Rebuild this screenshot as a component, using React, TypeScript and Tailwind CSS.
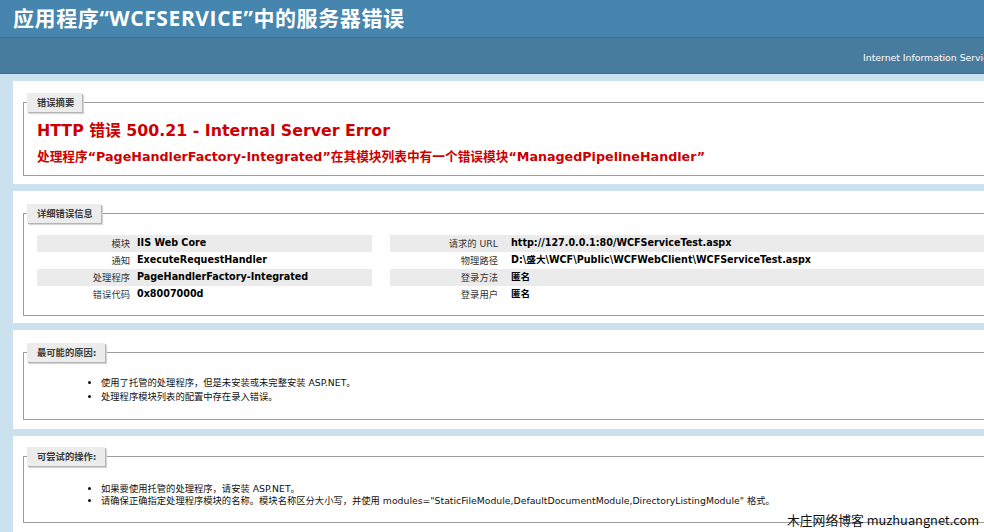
import React from 'react';

const detailsLeft: [string, string][] = [
  ['模块', 'IIS Web Core'],
  ['通知', 'ExecuteRequestHandler'],
  ['处理程序', 'PageHandlerFactory-Integrated'],
  ['错误代码', '0x8007000d'],
];

const detailsRight: [string, string][] = [
  ['请求的 URL', 'http://127.0.0.1:80/WCFServiceTest.aspx'],
  ['物理路径', 'D:\\盛大\\WCF\\Public\\WCFWebClient\\WCFServiceTest.aspx'],
  ['登录方法', '匿名'],
  ['登录用户', '匿名'],
];

// grey legend tab sitting on the fieldset line
const Legend = ({ children }: { children: React.ReactNode }) => (
  <legend className="-ml-[10px] h-[19px] bg-[#ececec] pr-[8px] pl-[10px] leading-[19px] font-bold text-[#3a3a3a] shadow-[1px_1px_0_#b4b4b4,2px_2px_1px_#d6d6d6]">
    {children}
  </legend>
);

const DetailRow = ({
  label,
  value,
  alt,
  labelWidth,
  gap,
}: {
  label: string;
  value: string;
  alt: boolean;
  labelWidth: string;
  gap: string;
}) => (
  <div className={`flex h-[17px] items-center whitespace-nowrap ${alt ? 'bg-[#ebebeb]' : ''}`}>
    <span className={`${labelWidth} shrink-0 text-right text-[#333]`}>{label}</span>
    <span className={`${gap} text-[9.6px] font-bold text-black`}>{value}</span>
  </div>
);

export default function App() {
  return (
    <div className="relative h-[532px] w-[984px] overflow-hidden bg-[#cbe2ee] font-['DejaVu_Sans','Noto_Sans_CJK_SC',sans-serif] text-[9.3px] text-black">
      {/* header */}
      <div className="flex h-[38px] items-center border-b border-[#3e6f93] bg-[#4686ae] pl-[13px]">
        <h1 className="font-['Open_Sans','Noto_Sans_CJK_SC',sans-serif] text-[21px] leading-none font-bold tracking-[0.6px] whitespace-nowrap text-white">
          应用程序“WCFSERVICE”中的服务器错误
        </h1>
      </div>
      <div className="flex h-[36px] items-center border-b border-[#3f6b8c] bg-[#487c9f] pt-[4px] pl-[863px] whitespace-nowrap text-white">
        Internet Information Services 7.5
      </div>

      <div className="flex w-[1120px] flex-col gap-[7px] pt-[7px] pl-[13px]">
        {/* summary */}
        <div className="bg-white px-[10px] pt-[12px] pb-[8px]">
          <fieldset className="border border-[#9c9c9c] pb-[10px] pl-[13px]">
            <Legend>错误摘要</Legend>
            <h2 className="mt-[10px] text-[15.8px] leading-[18px] font-bold whitespace-nowrap text-[#cc0000]">
              HTTP 错误 500.21 - Internal Server Error
            </h2>
            <h3 className="mt-[9px] text-[12.7px] leading-[16px] font-bold whitespace-nowrap text-[#cc0000]">
              处理程序“PageHandlerFactory-Integrated”在其模块列表中有一个错误模块“ManagedPipelineHandler”
            </h3>
          </fieldset>
        </div>

        {/* details */}
        <div className="bg-white px-[10px] pt-[13px] pb-[7px]">
          <fieldset className="border border-[#9c9c9c] pb-[12px] pl-[13px]">
            <Legend>详细错误信息</Legend>
            <div className="mt-[12px] flex gap-[18px]">
              <div className="w-[335px] shrink-0">
                {detailsLeft.map(([k, v], i) => (
                  <DetailRow key={k} label={k} value={v} alt={i % 2 === 0} labelWidth="w-[93px]" gap="ml-[7px]" />
                ))}
              </div>
              <div className="flex-1">
                {detailsRight.map(([k, v], i) => (
                  <DetailRow key={k} label={k} value={v} alt={i % 2 === 0} labelWidth="w-[108px]" gap="ml-[13px]" />
                ))}
              </div>
            </div>
          </fieldset>
        </div>

        {/* causes */}
        <div className="bg-white px-[10px] pt-[13px] pb-[9px]">
          <fieldset className="border border-[#9c9c9c] pb-[15px] pl-[13px]">
            <Legend>最可能的原因:</Legend>
            <ul className="mt-[14px] list-disc pl-[64px] leading-[14px] text-[#111]">
              <li>使用了托管的处理程序，但是未安装或未完整安装 ASP.NET。</li>
              <li>处理程序模块列表的配置中存在录入错误。</li>
            </ul>
          </fieldset>
        </div>

        {/* things to try */}
        <div className="bg-white px-[10px] pt-[11px] pb-[9px]">
          <fieldset className="border border-[#9c9c9c] pb-[15px] pl-[13px]">
            <Legend>可尝试的操作:</Legend>
            <ul className="mt-[17px] list-disc pl-[64px] leading-[12px] text-[#111]">
              <li>如果要使用托管的处理程序，请安装 ASP.NET。</li>
              <li className="whitespace-nowrap">
                请确保正确指定处理程序模块的名称。模块名称区分大小写，并使用 modules=&quot;StaticFileModule,DefaultDocumentModule,DirectoryListingModule&quot; 格式。
              </li>
            </ul>
          </fieldset>
        </div>
      </div>

      {/* watermark */}
      <div className="absolute top-[512px] left-[787px] font-['Noto_Sans_CJK_SC',sans-serif] text-[12.8px] leading-[15px] whitespace-nowrap text-[#111]">
        木庄网络博客 muzhuangnet.com
      </div>
    </div>
  );
}
